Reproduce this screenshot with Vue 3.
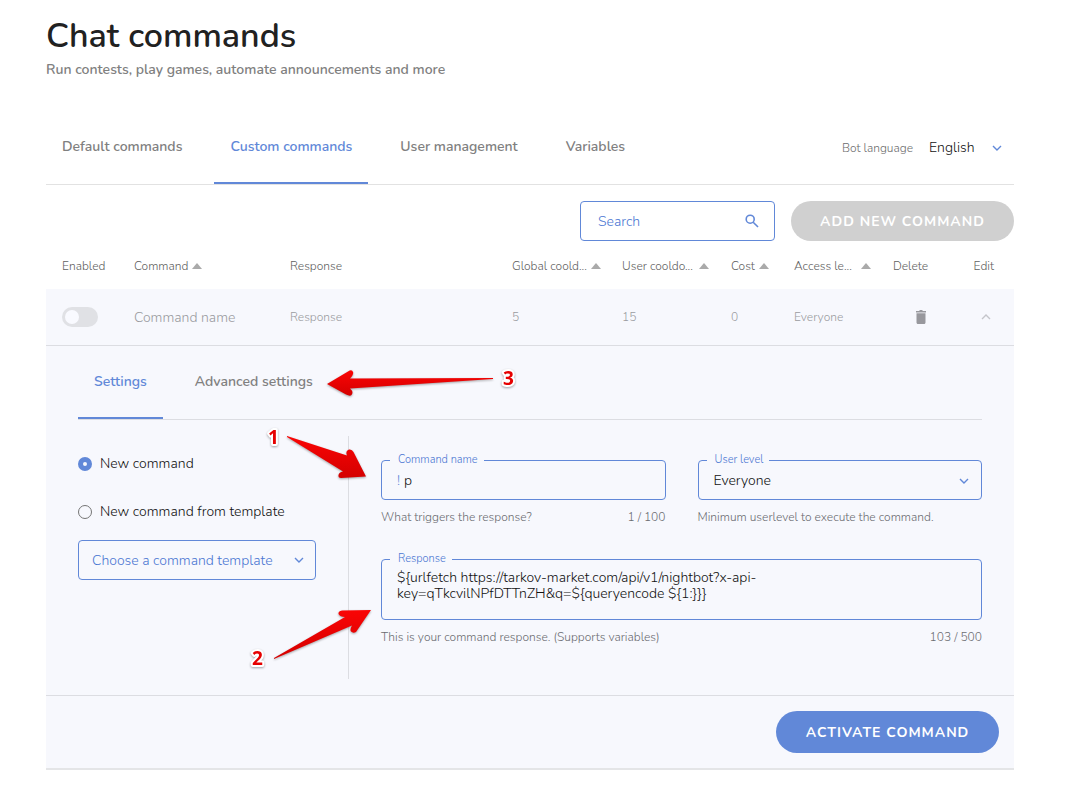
<script setup>
import { ref } from 'vue'

const tabs = ['Default commands', 'Custom commands', 'User management', 'Variables']
const activeTab = ref('Custom commands')
const panelTabs = ['Settings', 'Advanced settings']
const activePanel = ref('Settings')
const columns = [
  { key: 'enabled', label: 'Enabled' },
  { key: 'command', label: 'Command', sort: true },
  { key: 'response', label: 'Response' },
  { key: 'global', label: 'Global coold...', sort: true, wide: true },
  { key: 'user', label: 'User cooldo...', sort: true, wide: true },
  { key: 'cost', label: 'Cost', sort: true },
  { key: 'access', label: 'Access le...', sort: true, wide: true },
  { key: 'delete', label: 'Delete' },
  { key: 'edit', label: 'Edit' },
]
const enabled = ref(false)
const source = ref('new')
const name = ref('p')
const response = ref(
  '${urlfetch https://tarkov-market.com/api/v1/nightbot?x-api-key=qTkcvilNPfDTTnZH&q=${queryencode ${1:}}}'
)
</script>

<template>
  <main class="page">
    <header>
      <h1>Chat commands</h1>
      <p class="subtitle">Run contests, play games, automate announcements and more</p>
    </header>

    <div class="tabbar">
      <nav class="tabs">
        <button
          v-for="t in tabs"
          :key="t"
          type="button"
          class="tab"
          :class="{ active: t === activeTab }"
          @click="activeTab = t"
        >{{ t }}</button>
      </nav>
      <div class="language">
        <label for="language">Bot language</label>
        <span class="select">
          <select id="language"><option>English</option></select>
          <svg class="chevron" viewBox="0 0 10 6"><path d="M1 1l4 4 4-4" /></svg>
        </span>
      </div>
    </div>

    <div class="toolbar">
      <div class="search">
        <input type="search" placeholder="Search" aria-label="Search" />
        <svg viewBox="0 0 14 14"><circle cx="5.2" cy="5.2" r="4" /><path d="M8.2 8.2l4.8 4.8" /></svg>
      </div>
      <button type="button" class="pill" disabled>ADD NEW COMMAND</button>
    </div>

    <table>
      <colgroup>
        <col v-for="c in columns" :key="c.key" :class="'col-' + c.key" />
      </colgroup>
      <thead>
        <tr>
          <th v-for="c in columns" :key="c.key" scope="col" :class="c.key">
            <span class="head" :class="{ wide: c.wide }">
              {{ c.label }}
              <svg v-if="c.sort" class="sort" viewBox="0 0 10 6"><path d="M0 6L5 0l5 6z" /></svg>
            </span>
          </th>
        </tr>
      </thead>
      <tbody>
        <tr class="row">
          <td><input v-model="enabled" class="switch" type="checkbox" aria-label="Enabled" /></td>
          <td class="name">Command name</td>
          <td>Response</td>
          <td>5</td>
          <td>15</td>
          <td>0</td>
          <td>Everyone</td>
          <td class="delete">
            <button type="button" class="icon" aria-label="Delete">
              <svg class="trash" viewBox="0 0 10 14">
                <path d="M0 1h3l1-1h2l1 1h3v1.5H0z" />
                <path d="M.5 3.2h9v9.3c0 .8-.6 1.5-1.4 1.5H1.9C1.1 14 .5 13.300 .5 12.500z" />
              </svg>
            </button>
          </td>
          <td class="edit">
            <button type="button" class="icon" aria-label="Edit">
              <svg class="chevron up" viewBox="0 0 10 6"><path d="M1 5l4-4 4 4" /></svg>
            </button>
          </td>
        </tr>
        <tr>
          <td class="panel" :colspan="columns.length">
            <div class="tabs inner">
              <button
                v-for="t in panelTabs"
                :key="t"
                type="button"
                class="tab"
                :class="{ active: t === activePanel }"
                @click="activePanel = t"
              >{{ t }}</button>
            </div>

            <div class="settings">
              <div class="source">
                <label class="radio"><input v-model="source" type="radio" value="new" />New command</label>
                <label class="radio"><input v-model="source" type="radio" value="template" />New command from template</label>
                <span class="select template">
                  <select aria-label="Command template"><option>Choose a command template</option></select>
                  <svg class="chevron" viewBox="0 0 10 6"><path d="M1 1l4 4 4-4" /></svg>
                </span>
              </div>

              <div class="fields">
                <div class="field">
                  <fieldset>
                    <legend><label for="cmd-name">Command name</label></legend>
                    <span class="prefix">!</span>
                    <input id="cmd-name" v-model="name" type="text" maxlength="100" />
                  </fieldset>
                  <p class="hint"><span>What triggers the response?</span><span>{{ name.length }} / 100</span></p>
                </div>
                <div class="field">
                  <fieldset>
                    <legend><label for="level">User level</label></legend>
                    <span class="select level">
                      <select id="level"><option>Everyone</option></select>
                      <svg class="chevron" viewBox="0 0 10 6"><path d="M1 1l4 4 4-4" /></svg>
                    </span>
                  </fieldset>
                  <p class="hint"><span>Minimum userlevel to execute the command.</span></p>
                </div>
                <div class="field full">
                  <fieldset class="tall">
                    <legend><label for="resp">Response</label></legend>
                    <textarea id="resp" v-model="response" maxlength="500"></textarea>
                  </fieldset>
                  <p class="hint"><span>This is your command response. (Supports variables)</span><span>103 / 500</span></p>
                </div>
              </div>
            </div>

            <div class="footer">
              <button type="button" class="pill primary">ACTIVATE COMMAND</button>
            </div>

            <svg class="notes" viewBox="0 0 480 340" aria-hidden="true">
              <defs>
                <linearGradient id="red" x1="0" y1="0" x2="0" y2="1">
                  <stop offset="0" stop-color="#fa0505" />
                  <stop offset="1" stop-color="#d40000" />
                </linearGradient>
              </defs>
              <g class="arrows">
                <path d="M281 38L302 25.500Q306 23 307 26Q308 28 304 32.500L447 32L447 33L304 42.500Q308 46 305.500 49Q304 50.500 300 48.500z" />
                <path d="M241 90L301 109.500Q299 105 303 103.500Q306 103 307.500 106L320 130.500L295 132Q292 132 292.500 129Q293 126 297 125.500L241 91z" />
                <path d="M228 312L299 271Q294 271 292.500 268Q292 265 296 264.500L325 264L310 286Q307 287.500 305 285.500Q303.500 284 306 279.500L228 313z" />
              </g>
              <g class="digits">
                <text x="222" y="98">1</text>
                <text x="206" y="319">2</text>
                <text x="457" y="39">3</text>
              </g>
            </svg>
          </td>
        </tr>
      </tbody>
    </table>
  </main>
</template>

<style>
body {
  margin: 0;
  background: #fff;
}
</style>

<style scoped>
* {
  box-sizing: border-box;
}
.page {
  padding: 16px 73px 36px 46px;
  font: 300 14px/20px Nunito, Lato, "Open Sans", sans-serif;
  color: #111;
}
button,
input,
select,
textarea {
  font: inherit;
  color: inherit;
  margin: 0;
  padding: 0;
  border: 0;
  background: none;
  outline: none;
}
h1 {
  margin: 0;
  font-size: 34px;
  line-height: 40px;
  font-weight: 600;
  color: #212121;
}
.subtitle {
  margin: 4px 0 0;
  color: #808080;
  font-weight: 600;
}
.tabbar {
  display: flex;
  justify-content: space-between;
  margin-top: 28px;
  border-bottom: 1px solid #e2e2e2;
}
.tabs {
  display: flex;
  gap: 16px;
}
.tab {
  height: 76px;
  padding: 3px 16px 0;
  border-bottom: 2px solid transparent;
  color: #808080;
  font-weight: 600;
}
.tab.active {
  color: #6188d8;
  border-bottom-color: #6188d8;
}
.language {
  display: flex;
  align-items: center;
  gap: 16px;
  padding: 3px 12px 0 0;
}
.language label {
  font-size: 12px;
  color: #6c6c6c;
}
.select {
  position: relative;
  display: block;
}
select {
  appearance: none;
  width: 100%;
}
.language select {
  padding-right: 27px;
}
.chevron {
  width: 10px;
  height: 6px;
  fill: none;
  stroke: #6188d8;
  stroke-width: 1.4;
}
.select .chevron {
  position: absolute;
  right: 0;
  top: 50%;
  margin-top: -3px;
  pointer-events: none;
}
.toolbar {
  display: flex;
  justify-content: flex-end;
  gap: 16px;
  padding-top: 16px;
}
.search {
  display: flex;
  align-items: center;
  width: 195px;
  height: 40px;
  padding: 0 15px 0 17px;
  border: 1px solid #6188d8;
  border-radius: 4px;
}
.search input {
  flex: 1;
  min-width: 0;
  padding-top: 1px;
}
.search input::placeholder {
  color: #4a76d2;
  opacity: 1;
}
.search svg {
  width: 14px;
  height: 14px;
  fill: none;
  stroke: #6188d8;
  stroke-width: 1.6;
}
.pill {
  width: 223px;
  height: 40px;
  padding-top: 1px;
  border-radius: 21px;
  background: #d0d0d0;
  color: #fff;
  font-weight: 700;
  letter-spacing: 1px;
}
.pill.primary {
  height: 42px;
  padding-top: 2px;
  background: #6188d8;
}
table {
  width: 100%;
  table-layout: fixed;
  border-collapse: collapse;
  border-bottom: 2px solid #e4e5e7;
  font-size: 12px;
}
.col-enabled { width: 72px; }
.col-command { width: 156px; }
.col-global { width: 110px; }
.col-user { width: 109px; }
.col-cost { width: 63px; }
.col-access { width: 99px; }
.col-delete { width: 72px; }
.col-edit { width: 65px; }
th {
  height: 48px;
  padding: 2px 0 0 16px;
  text-align: left;
  font-weight: 300;
  color: #606060;
  white-space: nowrap;
}
.head {
  display: flex;
  align-items: center;
  gap: 4px;
}
.head.wide {
  justify-content: space-between;
  padding-right: 6px;
}
.sort {
  flex-shrink: 0;
  width: 10px;
  height: 6px;
  fill: #aaa;
}
th.edit,
td.edit {
  padding-right: 20px;
  text-align: right;
}
th.edit .head {
  justify-content: flex-end;
}
.row td {
  height: 56px;
  padding: 0 0 0 16px;
  background: #f7f8fd;
  border-bottom: 1px solid #dcdde2;
  color: #9a9ba0;
}
.row td.name {
  padding-top: 2px;
  font-size: 14px;
}
.row td.delete {
  padding-left: 39px;
}
.row td.edit {
  padding-right: 23px;
}
.icon {
  display: flex;
}
.edit .icon {
  margin-left: auto;
}
.trash {
  width: 10px;
  height: 14px;
  fill: #98989d;
}
.chevron.up {
  stroke: #c4c5ca;
}
.switch {
  appearance: none;
  display: block;
  width: 36px;
  height: 20px;
  padding: 3px;
  border-radius: 10px;
  background: #e0e1e5;
}
.switch::before {
  content: "";
  display: block;
  width: 14px;
  height: 14px;
  border-radius: 50%;
  background: #f9faff;
}
.switch:checked::before {
  margin-left: 16px;
}
.panel {
  position: relative;
  padding: 0;
  background: #f7f8fd;
  font-size: 14px;
}
.inner {
  margin: 0 32px;
  border-bottom: 1px solid #dcdde2;
}
.inner .tab {
  height: 73px;
  padding-top: 1px;
}
.settings {
  display: flex;
  padding: 16px 32px;
}
.source {
  display: flex;
  flex-direction: column;
  width: 271px;
  flex-shrink: 0;
  padding: 18px 32px 0 0;
  border-right: 1px solid #dcdde2;
}
.radio {
  display: flex;
  align-items: center;
  gap: 8px;
  height: 20px;
  margin-bottom: 28px;
}
.radio + .radio {
  margin-bottom: 18px;
}
.radio input {
  appearance: none;
  width: 14px;
  height: 14px;
  border: 1px solid #757575;
  border-radius: 50%;
}
.radio input:checked {
  border: 5px solid #6188d8;
}
.template select {
  height: 40px;
  padding: 2px 32px 0 13px;
  border: 1px solid #6188d8;
  border-radius: 4px;
  color: #4a76d2;
}
.template .chevron,
.level .chevron {
  right: 12px;
}
.fields {
  flex: 1;
  display: grid;
  grid-template-columns: 1fr 1fr;
  gap: 29px 32px;
  padding: 19px 0 34px 32px;
}
.full {
  grid-column: 1 / -1;
}
fieldset {
  display: flex;
  align-items: center;
  height: 45px;
  margin: 0;
  padding: 0 0 3px 15px;
  border: 1px solid #6188d8;
  border-radius: 4px;
  min-width: 0;
}
fieldset.tall {
  height: 66px;
  padding-bottom: 0;
}
legend {
  margin-left: -7px;
  padding: 0 6px 2px 8px;
  font-size: 11px;
  line-height: 10px;
  color: #4a76d2;
}
.prefix {
  margin-right: 4px;
  color: #6188d8;
}
fieldset input {
  flex: 1;
  min-width: 0;
}
.level {
  flex: 1;
}
.level select {
  height: 20px;
}
textarea {
  flex: 1;
  height: 46px;
  padding: 1px 160px 0 0;
  line-height: 16px;
  resize: none;
}
.hint {
  display: flex;
  justify-content: space-between;
  margin: 9px 0 0;
  font-size: 12px;
  line-height: 16px;
  color: #6a6b70;
}
.footer {
  display: flex;
  justify-content: flex-end;
  padding: 15px;
  border-top: 1px solid #dcdde2;
}
.notes {
  position: absolute;
  left: 0;
  top: 0;
  width: 480px;
  height: 340px;
  pointer-events: none;
}
.arrows {
  fill: url(#red);
  filter: drop-shadow(0 1px 1px rgba(0, 0, 0, 0.35));
}
.digits {
  font: 700 19px "Noto Sans", "Open Sans", sans-serif;
  fill: #e60000;
  stroke: #fff;
  stroke-width: 4px;
  stroke-linejoin: round;
  paint-order: stroke;
  filter: drop-shadow(0 1px 1px rgba(0, 0, 0, 0.35));
}
</style>
